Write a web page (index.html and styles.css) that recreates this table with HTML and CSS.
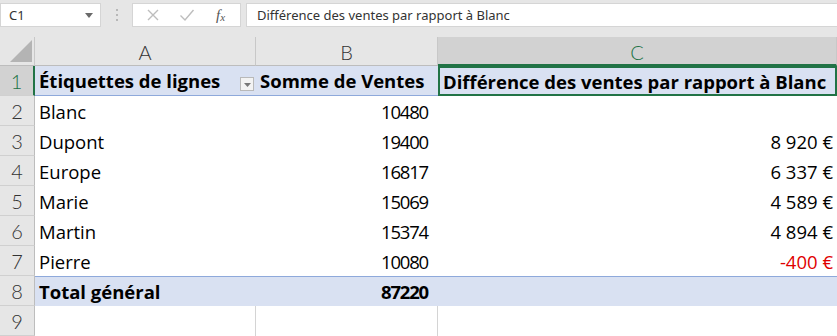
FILE: index.html
```html
<!DOCTYPE html>
<html lang="fr">
<head>
<meta charset="utf-8">
<link rel="stylesheet" href="styles.css">
</head>
<body>
<div class="fbar">
  <div class="namebox"><span>C1</span>
    <svg class="nb-arrow" width="8" height="5" viewBox="0 0 8 5"><path d="M0 0h8L4 5z" fill="#6a6a6a"/></svg>
  </div>
  <div class="dots"><i></i><i></i><i></i></div>
  <div class="fbtns">
    <svg width="14" height="14" viewBox="0 0 14 14"><path d="M2 2L12 12M12 2L2 12" stroke="#bdbdbd" stroke-width="1.4" fill="none"/></svg>
    <svg width="16" height="14" viewBox="0 0 16 14"><path d="M1.5 7.5L6 12L14.5 2" stroke="#bdbdbd" stroke-width="1.4" fill="none"/></svg>
    <span class="fx">f<sub>x</sub></span>
  </div>
  <div class="formula">Différence des ventes par rapport à Blanc</div>
</div>
<div class="sheet">
  <div class="corner"><svg width="22" height="22" viewBox="0 0 22 22"><path d="M22 0V22H0z" fill="#b4b4b4"/></svg></div>
  <div class="colh">A</div>
  <div class="colh">B</div>
  <div class="colh sel">C</div>

  <div class="rowh sel">1</div>
  <div class="c hdr a1">Étiquettes de lignes
    <span class="dd"><svg width="7" height="4" viewBox="0 0 7 4"><path d="M0 0h7L3.5 4z" fill="#777"/></svg></span>
  </div>
  <div class="c hdr">Somme de Ventes</div>
  <div class="c hdr active">Différence des ventes par rapport à Blanc</div>

  <div class="rowh">2</div><div class="c">Blanc</div><div class="c num">10480</div><div class="c num eur"></div>
  <div class="rowh">3</div><div class="c">Dupont</div><div class="c num">19400</div><div class="c num eur">8 920 €</div>
  <div class="rowh">4</div><div class="c">Europe</div><div class="c num">16817</div><div class="c num eur">6 337 €</div>
  <div class="rowh">5</div><div class="c">Marie</div><div class="c num">15069</div><div class="c num eur">4 589 €</div>
  <div class="rowh">6</div><div class="c">Martin</div><div class="c num">15374</div><div class="c num eur">4 894 €</div>
  <div class="rowh">7</div><div class="c">Pierre</div><div class="c num">10080</div><div class="c num eur neg">-400 €</div>

  <div class="rowh">8</div><div class="c tot">Total général</div><div class="c tot num">87220</div><div class="c tot"></div>

  <div class="rowh">9</div><div class="c g"></div><div class="c g"></div><div class="c"></div>
</div>
</body>
</html>
```
FILE: styles.css
```css
html, body {
  margin: 0;
  padding: 0;
  background: #e6e6e6;
  width: 837px;
  height: 336px;
  overflow: hidden;
}
.fbar {
  height: 30px;
  display: flex;
  align-items: center;
  font-family: "Noto Sans", "Open Sans", sans-serif;
}
.namebox {
  width: 101px;
  height: 24px;
  box-sizing: border-box;
  background: #fff;
  border: 1px solid #d5d5d5;
  display: flex;
  align-items: center;
  justify-content: space-between;
  padding: 0 7px 0 8px;
  font-size: 13px;
  color: #333;
}
.dots {
  width: 31px;
  display: flex;
  flex-direction: column;
  align-items: center;
  gap: 3px;
}
.dots i {
  width: 2px;
  height: 2px;
  background: #b8b8b8;
}
.fbtns {
  width: 109px;
  height: 24px;
  box-sizing: border-box;
  background: #fff;
  border: 1px solid #d5d5d5;
  display: flex;
  align-items: center;
  padding: 0 10px 0 13px;
  gap: 19px;
}
.fx {
  font-family: "Liberation Serif", serif;
  font-style: italic;
  font-size: 15px;
  color: #555;
  margin-left: 2px;
}
.fx sub {
  font-size: 11px;
  vertical-align: -1px;
}
.formula {
  margin-left: 5px;
  flex: 1;
  height: 24px;
  box-sizing: border-box;
  background: #fff;
  border: 1px solid #d5d5d5;
  border-right: none;
  padding-left: 10px;
  font-size: 13px;
  color: #333;
  line-height: 22px;
  white-space: nowrap;
}
.sheet {
  margin-top: 7px;
  display: grid;
  grid-template-columns: 35px 221px 182px 399px;
  grid-template-rows: 29px repeat(9, 30px);
  background: #fff;
  font-family: "Open Sans", "Lato", sans-serif;
  font-size: 18.5px;
  color: #000;
}
.corner {
  background: #e6e6e6;
  border-right: 1px solid #c8c8c8;
  border-bottom: 1px solid #bdbdbd;
  display: flex;
  align-items: flex-end;
  justify-content: flex-end;
  padding: 0 2px 3px 0;
}
.colh {
  background: #e6e6e6;
  border-right: 1px solid #c8c8c8;
  border-bottom: 1px solid #bdbdbd;
  display: flex;
  align-items: center;
  justify-content: center;
  font-family: "Lato", sans-serif;
  font-size: 20px;
  font-weight: 300;
  color: #333;
  padding-top: 2px;
}
.colh.sel {
  background: #d2d2d2;
  color: #217346;
  border-bottom: 2px solid #217346;
}
.rowh {
  background: #e6e6e6;
  border-right: 1px solid #bdbdbd;
  border-bottom: 1px solid #d0d0d0;
  display: flex;
  align-items: center;
  justify-content: center;
  font-family: "Lato", sans-serif;
  font-size: 20px;
  font-weight: 300;
  color: #333;
}
.rowh.sel {
  background: #d2d2d2;
  color: #217346;
  border-right: 2px solid #217346;
}
.c {
  display: flex;
  align-items: center;
  padding: 0 4px;
  white-space: nowrap;
  overflow: hidden;
  box-sizing: border-box;
}
.num {
  justify-content: flex-end;
  padding-right: 10px;
  letter-spacing: -1.2px;
}
.eur {
  letter-spacing: 0;
  padding-right: 4px;
}
.hdr {
  background: #d9e1f2;
  font-weight: 700;
  border-bottom: 1px solid #8ea9db;
}
.a1 {
  justify-content: space-between;
  padding-right: 2px;
}
.dd {
  width: 14px;
  height: 14px;
  box-sizing: border-box;
  border: 1px solid #b9b9b9;
  background: #f3f3f3;
  display: flex;
  align-items: flex-end;
  justify-content: center;
  padding-bottom: 3px;
  margin-top: 6px;
}
.active {
  border: 2px solid #217346;
  padding-left: 3px;
}
.neg {
  color: #e00000;
}
.tot {
  background: #d9e1f2;
  font-weight: 700;
  border-top: 1px solid #8ea9db;
}
.g {
  border-right: 1px solid #d4d4d4;
}
```
